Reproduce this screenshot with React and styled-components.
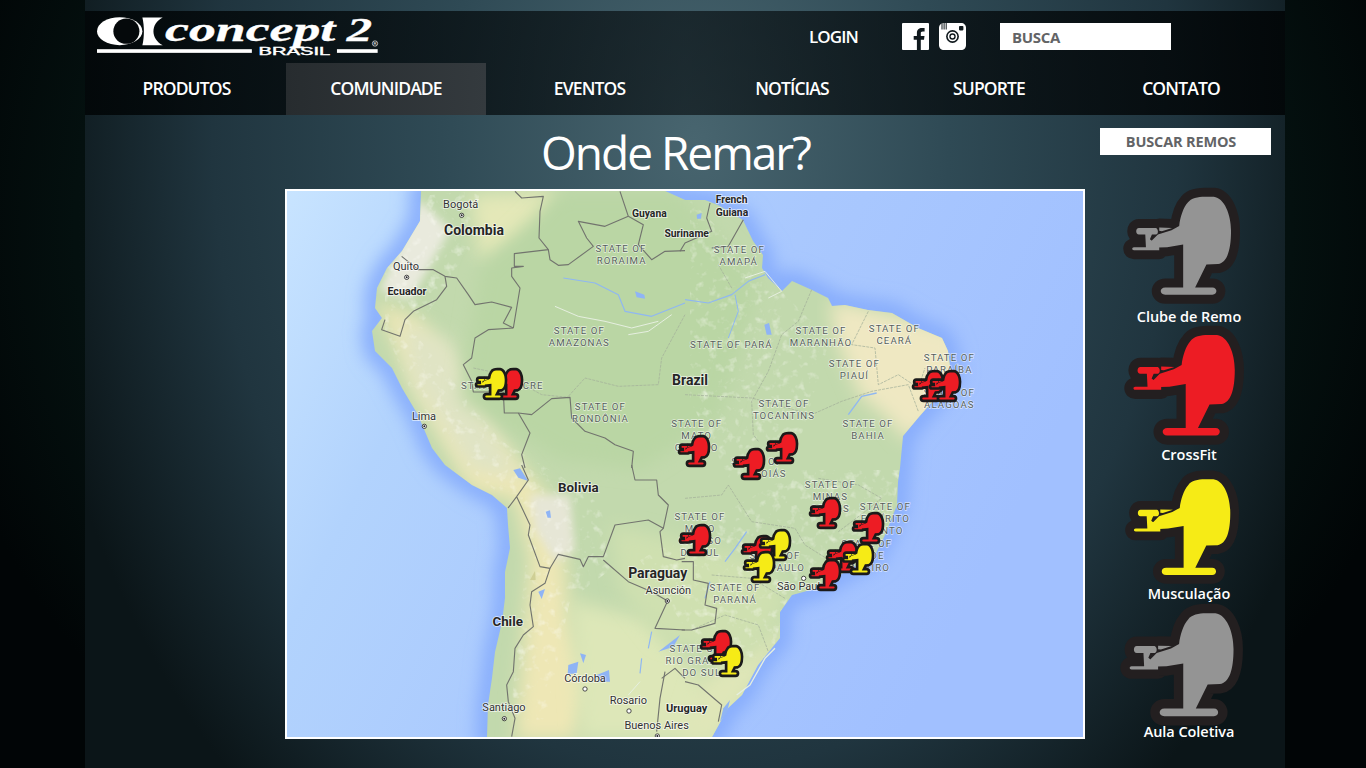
import React from 'react';
import styled, { createGlobalStyle } from 'styled-components';

const GlobalStyle = createGlobalStyle`
  html, body {
    margin: 0;
    padding: 0;
    height: 100%;
    background: radial-gradient(ellipse 760px 700px at 50% 30%, #0b1b20 0%, #04100f 80%, #010506 100%);
    overflow: hidden;
  }
  * { box-sizing: border-box; }
`;

const ROWER = 'M294 250 C303 236 325 232 345 232 L372 232 C404 236 424 285 424 335 C424 395 412 430 385 435 L350 436 L316 505 L368 505 C384 505 384 527 368 527 L226 527 C208 527 208 505 226 505 L280 505 L280 376 L232 384 L205 385 L182 368 L204 346 L245 333 L268 320 C271 295 280 265 294 250 Z M208 325 L247 326 L216 336 L208 335 Z M147 326 L198 326 C207 330 205 346 198 346 L186 346 L180 360 L200 376 L208 385 L208 393 L132 393 C125 393 125 384 132 384 L168 384 L166 346 L147 346 C136 346 136 326 147 326 Z';

const COLORS = { gray: '#949494', red: '#ed1c24', yellow: '#f6eb16' };

const NAV = [
  { label: 'PRODUTOS', width: 201, shift: 2 },
  { label: 'COMUNIDADE', width: 200, active: true },
  { label: 'EVENTOS', width: 207 },
  { label: 'NOTÍCIAS', width: 198 },
  { label: 'SUPORTE', width: 196 },
  { label: 'CONTATO', width: 188 },
];

const LEGEND = [
  { label: 'Clube de Remo', color: 'gray', size: 119, top: 31, gap: 3 },
  { label: 'CrossFit', color: 'red', size: 122, top: -2, gap: 0, nudge: 11 },
  { label: 'Musculação', color: 'yellow', size: 116, top: 5, gap: 0 },
  { label: 'Aula Coletiva', color: 'gray', size: 125, top: -1, gap: -4 },
];

const MARKERS = [
  ['red', 507, 384], ['yellow', 491, 384],
  ['red', 928, 386], ['red', 945, 386],
  ['red', 782, 448], ['red', 749, 464], ['red', 694, 451],
  ['red', 825, 513], ['red', 868, 528], ['red', 695, 540],
  ['red', 757, 551], ['yellow', 775, 545], ['yellow', 759, 567],
  ['red', 842, 557], ['yellow', 858, 559], ['red', 825, 575],
  ['red', 716, 646], ['yellow', 727, 661],
];

const LAND = '421,191 420,221 402,251 387,268 377,288 375,308 382,318 372,331 375,351 392,368 402,388 418,415 432,448 445,465 472,485 492,495 507,508 508,525 510,548 505,572 505,598 502,622 495,652 492,678 488,705 487,737 712,737 728,708 742,695 758,665 780,638 780,612 792,595 818,588 845,572 875,555 885,535 897,505 898,482 900,468 903,436 918,418 938,395 951,375 948,351 942,338 918,328 892,313 868,310 845,305 832,306 828,298 812,290 792,281 782,291 768,278 762,268 763,255 753,241 743,220 718,205 705,200 685,200 665,191';

const Page = styled.div`
  width: 1200px;
  height: 768px;
  margin-left: 85px;
  padding-top: 11px;
  overflow: hidden;
  font-family: "Open Sans", "Liberation Sans", sans-serif;
  background: radial-gradient(ellipse 670px 880px at 610px 140px, #48656f 0%, #2f4a55 38%, #20353f 72%, #0b1518 100%);
`;

const Header = styled.header`
  background: linear-gradient(90deg, rgba(0, 4, 5, 0.84) 0%, rgba(0, 4, 6, 0.58) 50%, rgba(0, 3, 4, 0.84) 100%);
`;

const TopRow = styled.div`
  height: 52px;
  display: flex;
  align-items: center;
`;

const LogoMark = styled.svg`
  width: 282px;
  height: 46px;
  margin-left: 12px;
  margin-top: -8px;
  flex: none;
`;

const Login = styled.a`
  margin-left: 430px;
  margin-top: -2px;
  color: #fff;
  font-size: 17px;
  font-weight: 600;
  letter-spacing: -0.9px;
`;

const Social = styled.div`
  display: flex;
  gap: 10px;
  margin-left: 44px;
  margin-top: -1px;
`;

const SocialIcon = styled.svg`
  width: 27px;
  height: 27px;
  display: block;
`;

const SearchBox = styled.div`
  width: 171px;
  height: 27px;
  margin-left: 34px;
  margin-top: -1px;
  padding-left: 12px;
  background: #fff;
  color: #636466;
  font-size: 15px;
  font-weight: 700;
  line-height: 28px;
  letter-spacing: -0.3px;
`;

const Nav = styled.nav`
  height: 52px;
  display: flex;
`;

const NavItem = styled.a`
  width: ${(p) => p.$width}px;
  padding-left: ${(p) => p.$shift || 0}px;
  padding-bottom: 2px;
  display: flex;
  align-items: center;
  justify-content: center;
  color: #fff;
  font-size: 17.5px;
  font-weight: 600;
  letter-spacing: -0.85px;
  background: ${(p) => (p.$active ? 'linear-gradient(90deg, #272c2f, #343a3e)' : 'transparent')};
`;

const Main = styled.main`
  display: grid;
  grid-template-columns: 200px 800px 200px;
`;

const Center = styled.section`
  grid-column: 2;
`;

const Title = styled.h1`
  height: 74px;
  margin: 0;
  padding-right: 19px;
  text-align: center;
  color: #fff;
  font-size: 46px;
  font-weight: 400;
  line-height: 75px;
  letter-spacing: -2px;
`;

const MapFrame = styled.div`
  width: 800px;
  height: 550px;
  border: 2px solid #fff;
`;

const MapCanvas = styled.svg`
  width: 796px;
  height: 546px;
  display: block;
`;

const StateLabel = styled.text`
  font-family: Roboto, "Liberation Sans", sans-serif;
  font-size: 29px;
  letter-spacing: 3.2px;
  text-anchor: middle;
  fill: #565f5c;
  stroke: rgba(255, 255, 255, 0.6);
  stroke-width: 4px;
  paint-order: stroke;
`;

const CityLabel = styled.text`
  font-family: Roboto, "Liberation Sans", sans-serif;
  font-size: ${(p) => p.$size || 33}px;
  text-anchor: middle;
  fill: #333;
  stroke: rgba(255, 255, 255, 0.7);
  stroke-width: 5px;
  paint-order: stroke;
`;

const CountryLabel = styled.text`
  font-family: Roboto, "Liberation Sans", sans-serif;
  font-weight: 700;
  font-size: ${(p) => p.$size || 42}px;
  text-anchor: middle;
  fill: #262626;
  stroke: rgba(255, 255, 255, 0.7);
  stroke-width: 5px;
  paint-order: stroke;
`;

const Border = styled.polyline`
  fill: none;
  stroke: #72746e;
  stroke-width: 3.4px;
  stroke-linejoin: round;
`;

const StateLine = styled.polyline`
  fill: none;
  stroke: #a3b09a;
  stroke-width: 2.2px;
  stroke-dasharray: 9 3;
`;

const River = styled.polyline`
  fill: none;
  stroke: ${(p) => (p.$pale ? '#e6efe0' : '#8fb7f2')};
  stroke-width: ${(p) => p.$w || 3.5}px;
  stroke-linejoin: round;
`;

const Lake = styled.polygon`
  fill: #8fb4f5;
`;

const RowerPath = styled.path`
  fill: ${(p) => COLORS[p.$color]};
  stroke: ${(p) => p.$halo};
  stroke-width: ${(p) => p.$stroke}px;
  stroke-linejoin: round;
  paint-order: stroke;
`;

const Sidebar = styled.aside`
  padding-top: 13px;
`;

const FindButton = styled.a`
  display: block;
  width: 171px;
  height: 27px;
  margin-left: 15px;
  padding-right: 9px;
  background: #fff;
  color: #636466;
  font-size: 14.5px;
  font-weight: 700;
  line-height: 28px;
  letter-spacing: -0.15px;
  text-align: center;
`;

const Legend = styled.div`
  width: 178px;
  margin-left: 15px;
  display: flex;
  flex-direction: column;
  align-items: center;
`;

const LegendItem = styled.div`
  margin-top: ${(p) => p.$top}px;
  display: flex;
  flex-direction: column;
  align-items: center;
`;

const LegendIcon = styled.svg`
  width: ${(p) => p.$size}px;
  height: ${(p) => p.$size}px;
  margin-right: ${(p) => p.$nudge || 15}px;
  display: block;
  flex: none;
`;

const LegendLabel = styled.span`
  margin-top: ${(p) => p.$gap}px;
  color: #fff;
  font-size: 14.5px;
  font-weight: 600;
  line-height: 18px;
  letter-spacing: -0.05px;
  white-space: nowrap;
`;

function Logo() {
  return (
    <LogoMark viewBox="36 30 845 137">
      <ellipse cx="104" cy="93" rx="68" ry="42" fill="#fff" />
      <ellipse cx="124" cy="93" rx="39" ry="38" fill="#05090b" />
      <path d="M172 52 L233 52 C196 70 196 116 233 135 L172 135 C178 110 178 78 172 52 Z" fill="#fff" />
      <text x="240" y="122" textLength="510" lengthAdjust="spacingAndGlyphs" fontFamily="Liberation Serif" fontStyle="italic" fontWeight="700" fontSize="100" fill="#fff" stroke="#fff" strokeWidth="1">concept</text>
      <text x="784" y="122" textLength="76" lengthAdjust="spacingAndGlyphs" fontFamily="Liberation Serif" fontStyle="italic" fontWeight="700" fontSize="100" fill="#fff" stroke="#fff" strokeWidth="1">2</text>
      <rect x="36" y="147" width="464" height="11" fill="#fff" />
      <rect x="755" y="147" width="122" height="11" fill="#fff" />
      <text x="520" y="164" textLength="215" lengthAdjust="spacingAndGlyphs" fontFamily="Liberation Sans" fontSize="32" fill="#fff" stroke="#fff" strokeWidth="1.2">BRASIL</text>
      <circle cx="869" cy="130" r="8" fill="none" stroke="#fff" strokeWidth="2" />
      <text x="869" y="135" textAnchor="middle" fontFamily="Liberation Sans" fontSize="13" fill="#fff">R</text>
    </LogoMark>
  );
}

function Facebook() {
  return (
    <SocialIcon viewBox="0 0 27 27">
      <rect width="27" height="27" rx="1" fill="#fff" />
      <path d="M18.8 27 V16.8 H22 L22.5 12.9 H18.8 V10.4 C18.8 9.2 19.2 8.5 20.8 8.5 H22.6 V5 C22.2 5 21.1 4.9 19.8 4.9 C17 4.9 14.9 6.7 14.9 9.9 V12.9 H11.7 V16.8 H14.9 V27 Z" fill="#10191d" />
    </SocialIcon>
  );
}

function Instagram() {
  return (
    <SocialIcon viewBox="0 0 27 27">
      <path d="M5 0 H22 C25 0 27 2 27 5 V22 C27 25 25 27 22 27 H5 C2 27 0 25 0 22 V5 C0 2 2 0 5 0 Z" fill="#fff" />
      <circle cx="13.5" cy="13.5" r="6.4" fill="#10191d" />
      <circle cx="13.5" cy="13.5" r="4.8" fill="#fff" />
      <circle cx="13.5" cy="13.5" r="3.2" fill="#10191d" />
      <circle cx="13.5" cy="13.5" r="1.8" fill="#fff" />
      <rect x="20" y="3" width="4.4" height="4.4" rx="0.8" fill="#10191d" />
      <rect x="2.5" y="0" width="1" height="6.5" fill="#10191d" />
      <rect x="4.6" y="0" width="1" height="6.5" fill="#10191d" />
      <rect x="6.7" y="0" width="1" height="6.5" fill="#10191d" />
    </SocialIcon>
  );
}

function Marker({ color, x, y }) {
  return (
    <g transform={`translate(${x} ${y}) scale(0.092) translate(-275 -380)`}>
      <RowerPath d={ROWER} $color={color} $halo="#1b1a1a" $stroke={58} />
    </g>
  );
}

function CityDot({ x, y, ring }) {
  return (
    <g>
      <circle cx={x} cy={y} r="6.5" fill="#fff" stroke="#222" strokeWidth="2.4" />
      {!ring && <circle cx={x} cy={y} r="3" fill="#222" />}
    </g>
  );
}

function BrazilMap() {
  return (
    <MapCanvas viewBox="287 191 796 546">
      <defs>
        <linearGradient id="ocean" x1="0" y1="0" x2="1" y2="0.35">
          <stop offset="0" stopColor="#c8e4ff" />
          <stop offset="0.25" stopColor="#b2d3fd" />
          <stop offset="0.6" stopColor="#a9c8fe" />
          <stop offset="1" stopColor="#a1c0ff" />
        </linearGradient>
        <filter id="soft" x="-10%" y="-10%" width="120%" height="120%">
          <feGaussianBlur stdDeviation="9" />
        </filter>
        <filter id="softer" x="-10%" y="-10%" width="120%" height="120%">
          <feGaussianBlur stdDeviation="4" />
        </filter>
        <filter id="mottle" x="0" y="0" width="100%" height="100%">
          <feTurbulence type="fractalNoise" baseFrequency="0.11" numOctaves="3" seed="7" />
          <feColorMatrix values="0 0 0 0 1  0 0 0 0 1  0 0 0 0 0.96  2.4 0 0 0 -1.3" />
        </filter>
        <clipPath id="landClip"><polygon points={LAND} /></clipPath>
        <clipPath id="highland">
          <polygon points="385,270 430,195 480,191 470,250 430,310 420,340 500,440 600,500 610,570 570,600 545,720 510,720 530,520 470,470 410,390 385,330" />
          <polygon points="640,560 800,470 900,470 890,530 790,590 770,660 700,650" />
          <polygon points="690,200 760,270 830,340 800,440 730,480 690,400" />
        </clipPath>
      </defs>

      <rect x="287" y="191" width="796" height="546" fill="url(#ocean)" />
      <polygon points={LAND} fill="none" stroke="#84aafc" strokeWidth="20" filter="url(#soft)" />
      <polygon points={LAND} fill="#c2d9ad" />

      <g clipPath="url(#landClip)">
        <polygon points="830,300 960,330 960,410 905,440 890,420 860,395 845,360 835,335" fill="#efe8c2" filter="url(#soft)" />
        <polygon points="375,300 420,400 470,490 515,500 530,560 515,740 540,740 575,740 590,690 570,620 565,560 550,500 500,440 470,400 420,320" fill="#eee7b5" filter="url(#soft)" />
        <polygon points="570,600 650,620 700,680 720,740 580,740" fill="#dde7b8" filter="url(#soft)" />
        <polygon points="700,680 790,620 760,680 720,740 680,740" fill="#dfe6b8" filter="url(#soft)" />
        <polygon points="610,525 760,560 790,600 750,660 660,640 620,590" fill="#cfe0b0" filter="url(#soft)" />
        <polygon points="470,195 560,191 540,230 480,260" fill="#e4e8b8" filter="url(#soft)" />
        <polygon points="420,200 450,230 410,300 380,290" fill="#e9eadd" filter="url(#softer)" />
        <polygon points="530,495 570,495 575,550 555,562 535,530" fill="#e6e6d6" filter="url(#softer)" />
        <polygon points="400,320 450,340 520,480 470,470 410,380" fill="#e0e4c4" filter="url(#soft)" />
        <polygon points="560,191 680,191 720,240 760,280 720,420 640,470 560,460 460,400 480,270" fill="#bad6a4" filter="url(#soft)" />
        <g clipPath="url(#highland)">
          <rect x="287" y="191" width="796" height="546" filter="url(#mottle)" opacity="0.55" />
        </g>
      </g>

      <g transform="translate(285 188) scale(0.33333)">
        <Lake points="1050,310 1078,320 1080,332 1055,328" />
        <River points="835,270 930,285 1000,320 1020,370 1100,385 1200,345" />
        <River $pale $w={3} points="810,355 880,385 960,400 1040,420 1120,400" />
        <River $pale $w={3} points="1030,440 1090,430 1160,380" />
        <StateLine points="1200,380 1130,510 1120,590 1000,595 900,570 850,625" />
        <StateLine points="565,540 660,560 770,620 850,628" />
        <Border points="690,10 710,30 775,25 765,70 762,150 790,185 745,190 688,197 688,235 715,235 680,240 680,265 705,300 685,420" />
        <Border points="790,185 795,215 820,232 850,230 925,175 905,150 880,100 960,115 1030,85 1005,10" />
        <Border points="1030,85 1075,110 1060,170 1100,215 1140,190 1200,188" />
        <Border points="350,205 400,245 445,245 480,265 515,270 550,320 570,350 620,342 680,358 655,405 685,420" />
        <Border points="480,265 485,295 455,335 385,370 360,395 345,445 290,425 300,395" />
        <Border points="685,420 610,425 570,450 560,510 535,530 560,580 565,612 655,612 658,675 700,675 740,680 800,632 855,628 860,690 900,730 960,750 990,770 1045,790 1040,840" />
        <Border points="700,675 735,735 710,800 720,840" />
        <CityLabel x="527" y="60">Bogotá</CityLabel>
        <CityDot x={530} y={82} />
        <CountryLabel x="567" y="142">Colombia</CountryLabel>
        <CityLabel x="363" y="247">Quito</CityLabel>
        <CityDot x={365} y={268} />
        <CountryLabel x="366" y="322" $size={32}>Ecuador</CountryLabel>
        <CountryLabel x="1093" y="88" $size={31}>Guyana</CountryLabel>
        <StateLabel x="1008" y="193">STATE OF</StateLabel>
        <StateLabel x="1010" y="228">RORAIMA</StateLabel>
        <StateLabel x="883" y="438">STATE OF</StateLabel>
        <StateLabel x="883" y="474">AMAZONAS</StateLabel>
        <StateLabel x="652" y="604">STATE OF ACRE</StateLabel>
        <CityLabel x="417" y="695">Lima</CityLabel>
        <CityDot x={418} y={715} />
        <StateLabel x="946" y="666">STATE OF</StateLabel>
        <StateLabel x="946" y="702">RONDÔNIA</StateLabel>
      </g>

      <g transform="translate(685 188) scale(0.33333)">
        <Lake points="238,410 252,405 260,440 245,440" />
        <Lake points="35,80 50,75 48,92 36,92" />
        <River points="0,335 70,345 140,320 190,280 240,260" />
        <River points="150,320 160,370 130,450" $w={3} />
        <River points="490,680 530,625 575,615" $w={4} />
        <River $pale $w={3} points="180,270 240,250 290,310 250,330" />
        <StateLine points="380,305 340,400 290,440 250,550 200,640 205,740 220,760" />
        <StateLine points="550,370 500,470 570,480 580,590 640,560 700,600 720,540" />
        <StateLine points="0,620 200,630 380,680 470,640 560,610 670,590 700,670" />
        <StateLine points="100,230 140,300" />
        <Border points="75,45 65,90 80,130 0,165 -15,190" />
        <Border points="175,95 130,175 80,180" />
        <CountryLabel x="140" y="46" $size={31}>French</CountryLabel>
        <CountryLabel x="141" y="85" $size={31}>Guiana</CountryLabel>
        <CountryLabel x="5" y="147" $size={31}>Suriname</CountryLabel>
        <CountryLabel x="15" y="592" $size={42}>Brazil</CountryLabel>
        <StateLabel x="163" y="195">STATE OF</StateLabel>
        <StateLabel x="161" y="230">AMAPÁ</StateLabel>
        <StateLabel x="139" y="480">STATE OF PARÁ</StateLabel>
        <StateLabel x="408" y="438">STATE OF</StateLabel>
        <StateLabel x="408" y="474">MARANHÃO</StateLabel>
        <StateLabel x="628" y="432">STATE OF</StateLabel>
        <StateLabel x="628" y="468">CEARÁ</StateLabel>
        <StateLabel x="508" y="537">STATE OF</StateLabel>
        <StateLabel x="508" y="573">PIAUÍ</StateLabel>
        <StateLabel x="793" y="519">STATE OF</StateLabel>
        <StateLabel x="793" y="555">PARAÍBA</StateLabel>
        <StateLabel x="793" y="625">STATE OF</StateLabel>
        <StateLabel x="793" y="660">ALAGOAS</StateLabel>
        <StateLabel x="297" y="658">STATE OF</StateLabel>
        <StateLabel x="297" y="693">TOCANTINS</StateLabel>
        <StateLabel x="549" y="717">STATE OF</StateLabel>
        <StateLabel x="549" y="753">BAHIA</StateLabel>
        <StateLabel x="35" y="717">STATE OF</StateLabel>
        <StateLabel x="35" y="752">MATO</StateLabel>
        <StateLabel x="35" y="788">GROSSO</StateLabel>
        <StateLabel x="215" y="830">STATE OF</StateLabel>
      </g>

      <g transform="translate(285 465) scale(0.33333)">
        <Lake points="685,15 705,10 730,48 700,38" />
        <Lake points="782,140 795,136 798,158 788,158" />
        <Lake points="760,380 780,372 770,402" />
        <Lake points="850,600 880,590 875,625 848,628" />
        <Lake points="885,565 903,570 895,595" />
        <Lake points="935,630 972,615 975,650 940,650" />
        <Lake points="1120,560 1185,510 1165,545" />
        <polygon points="735,345 750,318 752,345" fill="#cfcf95" />
        <River points="1100,500 1090,550" />
        <River points="1070,580 1065,625" />
        <River $pale $w={3} points="1030,690 1065,650" />
        <Border points="710,0 730,45 695,95 670,128 695,95 735,180 730,210 765,305 795,310 820,268 885,283 895,305 910,275 955,275 990,180 1090,165 1135,190 1125,200 1135,275 1175,285 1200,280" />
        <Border points="1040,0 1050,45 1115,45 1120,90 1150,120 1135,190" />
        <Border points="795,310 780,355 740,380 735,420 745,485 715,510 690,550 685,620 665,660 670,710 690,760 680,815" />
        <Border points="955,285 1030,350 1100,380 1148,408 1110,490 1200,495" />
        <Border points="1140,620 1125,700 1115,800" />
        <Border points="1130,640 1170,610 1200,640" />
        <CountryLabel x="880" y="80" $size={40}>Bolivia</CountryLabel>
        <CountryLabel x="668" y="484" $size={40}>Chile</CountryLabel>
        <CountryLabel x="1118" y="340" $size={42}>Paraguay</CountryLabel>
        <CityLabel x="1150" y="388">Asunción</CityLabel>
        <CityDot x={1147} y={408} />
        <CityLabel x="900" y="652">Córdoba</CityLabel>
        <CityDot x={900} y={672} ring />
        <CityLabel x="1030" y="718">Rosario</CityLabel>
        <CityDot x={1032} y={738} ring />
        <CityLabel x="657" y="739">Santiago</CityLabel>
        <CityDot x={658} y={761} />
        <CityLabel x="1115" y="793">Buenos Aires</CityLabel>
        <CityDot x={1117} y={813} />
        <CountryLabel x="1205" y="742" $size={33}>Uruguay</CountryLabel>
      </g>

      <g transform="translate(685 465) scale(0.33333)">
        <River points="120,290 150,250 185,200" />
        <River points="60,400 75,350" />
        <River $pale $w={4} points="155,690 195,660 240,580 270,550" />
        <Lake points="115,730 135,705 125,745 105,770" />
        <StateLine points="0,100 110,90 130,60 200,170 330,190 360,240 440,290" />
        <StateLine points="80,330 200,340 300,400" />
        <StateLine points="20,495 120,450 220,480 250,560" />
        <StateLine points="400,40 520,60 590,100 540,140 460,200" />
        <Border points="-10,290 25,290 25,345 70,355 60,420 95,430 90,475 20,495 -10,495" />
        <Border points="0,650 40,660 110,720 100,770" />
        <StateLabel x="255" y="37">GOIÁS</StateLabel>
        <StateLabel x="436" y="70">STATE OF</StateLabel>
        <StateLabel x="436" y="105">MINAS</StateLabel>
        <StateLabel x="436" y="140">GERAIS</StateLabel>
        <StateLabel x="601" y="135">STATE OF</StateLabel>
        <StateLabel x="601" y="170">ESPÍRITO</StateLabel>
        <StateLabel x="601" y="206">SANTO</StateLabel>
        <StateLabel x="545" y="245">STATE OF</StateLabel>
        <StateLabel x="545" y="282">RIO DE</StateLabel>
        <StateLabel x="545" y="318">JANEIRO</StateLabel>
        <StateLabel x="270" y="282">STATE OF</StateLabel>
        <StateLabel x="270" y="318">SÃO PAULO</StateLabel>
        <StateLabel x="45" y="165">STATE OF</StateLabel>
        <StateLabel x="45" y="200">MATO</StateLabel>
        <StateLabel x="45" y="237">GROSSO</StateLabel>
        <StateLabel x="45" y="272">DO SUL</StateLabel>
        <StateLabel x="150" y="378">STATE OF</StateLabel>
        <StateLabel x="150" y="413">PARANÁ</StateLabel>
        <CityDot x={356} y={340} ring />
        <CityLabel x="350" y="376">São Paulo</CityLabel>
        <StateLabel x="30" y="562">STATE OF</StateLabel>
        <StateLabel x="40" y="597">RIO GRANDE</StateLabel>
        <StateLabel x="50" y="632">DO SUL</StateLabel>
      </g>

      {MARKERS.map(([color, x, y], index) => (
        <Marker key={index} color={color} x={x} y={y} />
      ))}
    </MapCanvas>
  );
}

export default function App() {
  return (
    <Page>
      <GlobalStyle />
      <Header>
        <TopRow>
          <Logo />
          <Login>LOGIN</Login>
          <Social>
            <Facebook />
            <Instagram />
          </Social>
          <SearchBox>BUSCA</SearchBox>
        </TopRow>
        <Nav>
          {NAV.map((item) => (
            <NavItem key={item.label} $width={item.width} $shift={item.shift} $active={item.active}>
              {item.label}
            </NavItem>
          ))}
        </Nav>
      </Header>
      <Main>
        <Center>
          <Title>Onde Remar?</Title>
          <MapFrame>
            <BrazilMap />
          </MapFrame>
        </Center>
        <Sidebar>
          <FindButton>BUSCAR REMOS</FindButton>
          <Legend>
            {LEGEND.map((item) => (
              <LegendItem key={item.label} $top={item.top}>
                <LegendIcon viewBox="96 200 358 358" $size={item.size} $nudge={item.nudge}>
                  <RowerPath d={ROWER} $color={item.color} $halo="#231f20" $stroke={54} />
                </LegendIcon>
                <LegendLabel $gap={item.gap}>{item.label}</LegendLabel>
              </LegendItem>
            ))}
          </Legend>
        </Sidebar>
      </Main>
    </Page>
  );
}
